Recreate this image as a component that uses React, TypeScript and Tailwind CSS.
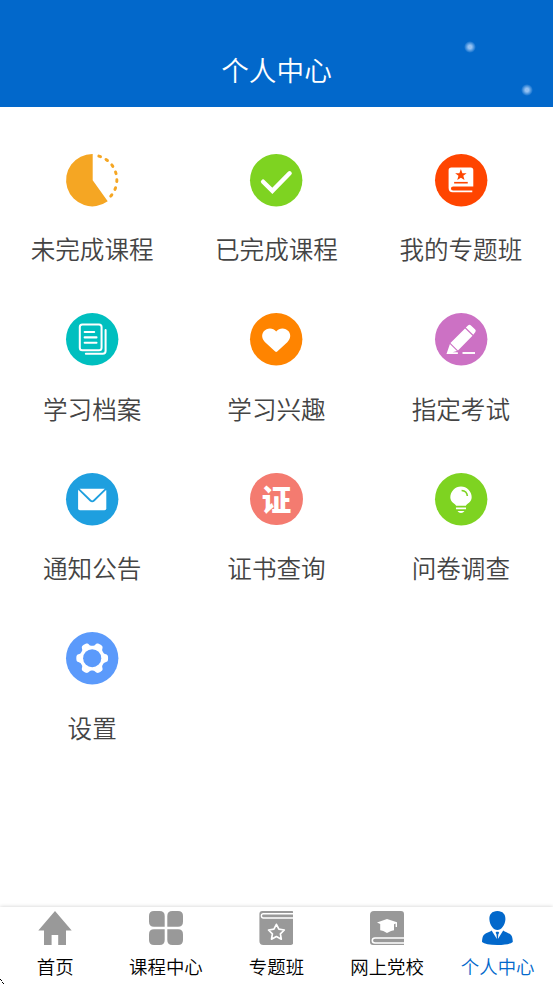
import type { ReactNode } from "react";

const gearPath = (() => {
  const points: string[] = [];
  for (let i = 0; i < 180; i++) {
    const a = (i * Math.PI) / 90;
    const r = 14 + 1.8 * Math.tanh(2 * Math.cos(6 * a) + 0.3);
    points.push(`${(26 + r * Math.cos(a)).toFixed(2)},${(26 + r * Math.sin(a)).toFixed(2)}`);
  }
  return `M${points.join("L")}Z`;
})();

function Disc({ color, children }: { color: string; children: ReactNode }) {
  return (
    <svg viewBox="0 0 52 52" className="size-[52.4px] shrink-0 overflow-visible">
      <circle cx="26" cy="26" r="26" fill={color} />
      {children}
    </svg>
  );
}

const items: { label: string; icon: ReactNode }[] = [
  {
    label: "未完成课程",
    icon: (
      <svg viewBox="0 0 52 52" className="size-[52.4px] shrink-0 overflow-visible">
        <path d="M26.5 26V0A26 26 0 1 0 41.4 47Z" fill="#f5a623" />
        <path d="M32.6 2.1A24.5 24.5 0 0 1 43.4 42.9" fill="none" stroke="#f5a623" strokeWidth="2.9" strokeLinecap="round" strokeDasharray="1.8 6.1" />
      </svg>
    ),
  },
  {
    label: "已完成课程",
    icon: (
      <Disc color="#7ed321">
        <path d="M13 27.5L22.2 36.6L39.3 19.1" fill="none" stroke="#fff" strokeWidth="4.4" strokeLinecap="round" />
      </Disc>
    ),
  },
  {
    label: "我的专题班",
    icon: (
      <Disc color="#ff4500">
        <path d="M16.3 13.5H35.5Q38 13.5 38 16V32.2H18Q15.8 32.2 15.8 34.2Q15.8 36.2 18 36.2H37V38H17.5Q13.5 38 13.5 33.8V16.3Q13.5 13.5 16.3 13.5Z" fill="#fff" />
        <path d="M25.7 15L27.2 19L31.4 19.1L28.1 21.7L29.3 25.9L25.7 23.5L22.1 25.9L23.3 21.7L20 19.1L24.2 19Z" fill="#ff4500" />
        <path d="M19 28.5H32.5" stroke="#ff4500" strokeWidth="1.6" />
      </Disc>
    ),
  },
  {
    label: "学习档案",
    icon: (
      <Disc color="#00bfbf">
        <g fill="none" stroke="#fff" strokeWidth="2" strokeLinecap="round">
          <rect x="13.7" y="11.3" width="21.6" height="25.6" rx="2.5" />
          <path d="M39.3 17V37.8Q39.3 40.4 36.5 40.4H19.7M18.5 18.8H28M18.5 24.2H30.3M18.5 29.5H30.3" />
        </g>
      </Disc>
    ),
  },
  {
    label: "学习兴趣",
    icon: (
      <Disc color="#ff8400">
        <path d="M26 18.4C29.2 14.1 35.4 14.5 38.3 18.2C41.2 22 39.9 26.2 37 29L27 38.3Q26 39.2 25 38.3L15 29C12.1 26.2 10.8 22 13.7 18.2C16.6 14.5 22.8 14.1 26 18.4Z" fill="#fff" />
      </Disc>
    ),
  },
  {
    label: "指定考试",
    icon: (
      <Disc color="#cc71c4">
        <path d="M29.8 15.3L37.2 22.6L22.8 37.1L15.3 29.8ZM30.6 14.5L33 12.2Q34.3 11 35.7 12.3L39.9 16.5Q41.1 17.8 39.9 19.2L38 21.7ZM14.8 30.7L21.8 37.7L17.5 39L22.7 39V40.6H11.4Z" fill="#fff" />
        <path d="M27.3 39.7H39.7" stroke="#fff" strokeWidth="1.9" />
      </Disc>
    ),
  },
  {
    label: "通知公告",
    icon: (
      <Disc color="#1e9fdf">
        <rect x="12" y="15.7" width="28" height="21.3" rx="1.8" fill="#fff" />
        <path d="M12.4 15.8L24.2 27.3Q26 29 27.8 27.3L39.6 15.8" fill="none" stroke="#1e9fdf" strokeWidth="1.8" />
      </Disc>
    ),
  },
  {
    label: "证书查询",
    icon: (
      <div className="flex size-[52.4px] shrink-0 items-center justify-center rounded-full bg-[#f47b70] pb-px text-[29.5px] leading-none font-black text-white">
        <span>证</span>
      </div>
    ),
  },
  {
    label: "问卷调查",
    icon: (
      <Disc color="#7ed321">
        <path d="M20.9 32.5C20.3 30.4 15.2 29.3 15.2 24A10.6 10.6 0 0 1 36.4 24C36.4 29.3 31.3 30.4 30.7 32.5Z" fill="#fff" />
        <path d="M26.4 17.4Q31.7 17.8 32.1 22.8" fill="none" stroke="#7ed321" strokeWidth="1.6" />
        <path d="M20.8 34.2H30.8V36.1H20.8ZM22.3 37.6H29.3Q28 39.6 25.8 39.6Q23.6 39.6 22.3 37.6Z" fill="#fff" />
      </Disc>
    ),
  },
  {
    label: "设置",
    icon: (
      <Disc color="#5b9afb">
        <path d={gearPath} fill="#fff" />
        <circle cx="26" cy="26" r="9" fill="#5b9afb" />
      </Disc>
    ),
  },
];

const tabs: { label: string; active?: boolean; icon: ReactNode }[] = [
  {
    label: "首页",
    icon: <path d="M17 0L33.7 19.6H28V34H20.2V24H13.6V34H6V19.6H.3Z" fill="#999" />,
  },
  {
    label: "课程中心",
    icon: (
      <g fill="#999">
        <path d="M5 0H10.5Q15.7 0 15.7 5V15.7H5Q0 15.7 0 10.7V5Q0 0 5 0Z" />
        <path d="M23.3 0H29Q34 0 34 5V10.7Q34 15.7 29 15.7H18.3V5Q18.3 0 23.3 0Z" />
        <path d="M5 18.3H15.7V29Q15.7 34 10.7 34H5Q0 34 0 29V23.3Q0 18.3 5 18.3Z" />
        <path d="M18.3 18.3H29Q34 18.3 34 23.3V29Q34 34 29 34H23.3Q18.3 34 18.3 29Z" />
      </g>
    ),
  },
  {
    label: "专题班",
    icon: (
      <g transform="translate(.4 0)">
        <path d="M3 0H32.5Q34 0 34 1.5V31Q34 34 31 34H4Q0 34 0 30V3Q0 0 3 0Z" fill="#999" />
        <path d="M34 2.7H4Q2 2.7 2 4.8Q2 7 4 7H34" fill="none" stroke="#fff" strokeWidth="1.4" />
        <path d="M17 13.3L19.5 18.2L24.9 19L21 22.8L21.9 28.2L17 25.6L12.1 28.2L13 22.8L9.1 19L14.5 18.2Z" fill="none" stroke="#fff" strokeWidth="1.7" strokeLinejoin="round" />
      </g>
    ),
  },
  {
    label: "网上党校",
    icon: (
      <>
        <path d="M4 0H31Q34 0 34 3V34H3Q0 34 0 31V4Q0 0 4 0Z" fill="#999" />
        <path d="M34 27H5Q2.3 27 2.3 29.4Q2.3 31.9 5 31.9H34" fill="none" stroke="#fff" strokeWidth="1.5" />
        <path d="M7 11.6L17 7.9L27 11.3V16H25.6V12.6L24 13.3V19.2Q21.5 19.3 17 22Q13 19.4 10.2 19.2V13.1Z" fill="#fff" />
      </>
    ),
  },
  {
    label: "个人中心",
    active: true,
    icon: (
      <g transform="translate(-.6 0)">
        <path d="M17 0C22.5 0 25.3 3.5 25 8.5C24.7 14 21 19 17 19C13 19 9.3 14 9 8.5C8.7 3.5 11.5 0 17 0Z" fill="#0268cb" />
        <path d="M11.2 19.5L16.5 28L16.1 23.2L15.2 21.7L16 20.7H18L18.8 21.7L17.9 23.2L17.5 28L22.8 19.5C25 21.5 29.5 22 31 24.5C32 26 32.3 29 32.4 31Q29 34 17 34Q5 34 1.6 31C1.7 29 2 26 3 24.5C4.5 22 9 21.5 11.2 19.5Z" fill="#0268cb" />
      </g>
    ),
  },
];

export default function App() {
  return (
    <div className="relative flex h-[984px] w-full flex-col overflow-hidden bg-white font-['Noto_Sans_CJK_SC',sans-serif]">
      <header className="relative flex h-[106.7px] shrink-0 items-end justify-center bg-[#0268cb] pb-[18px]">
        <h1 className="text-[27.65px] leading-[40px] font-[350] text-white">个人中心</h1>
        <i className="absolute top-[41px] left-[464px] size-[12px] rounded-full bg-radial from-[#94c1f2] from-20% to-transparent to-70%" />
        <i className="absolute top-[84px] left-[521px] size-[12px] rounded-full bg-radial from-[#94c1f2] from-20% to-transparent to-70%" />
      </header>

      <main className="grid flex-1 auto-rows-[159.5px] grid-cols-3 content-start pt-[47px]">
        {items.map((item) => (
          <div key={item.label} className="flex flex-col items-center">
            {item.icon}
            <span className="mt-[24.2px] text-[24.58px] leading-[36px] font-[350] whitespace-nowrap text-[#444]">{item.label}</span>
          </div>
        ))}
      </main>

      <nav className="grid h-[77px] shrink-0 grid-cols-5 bg-white pt-[4px] shadow-[0_0_4px_rgba(0,0,0,0.2)]">
        {tabs.map((tab) => (
          <div key={tab.label} className={`flex flex-col items-center ${tab.active ? "text-[#0268cb]" : "text-black"}`}>
            <svg viewBox="0 0 34 34" className="size-[34px] shrink-0">
              {tab.icon}
            </svg>
            <span className="mt-[8px] text-[18.43px] leading-[27px] font-[350] whitespace-nowrap">{tab.label}</span>
          </div>
        ))}
      </nav>

      <svg viewBox="0 0 4 5" className="absolute bottom-0 left-0 h-[5px] w-[4px]" shapeRendering="crispEdges">
        <path d="M0 0h1v1h-1zM1 1h1v1h-1zM2 3h1v1h-1zM3 4h1v1h-1z" fill="#000" />
      </svg>
    </div>
  );
}
